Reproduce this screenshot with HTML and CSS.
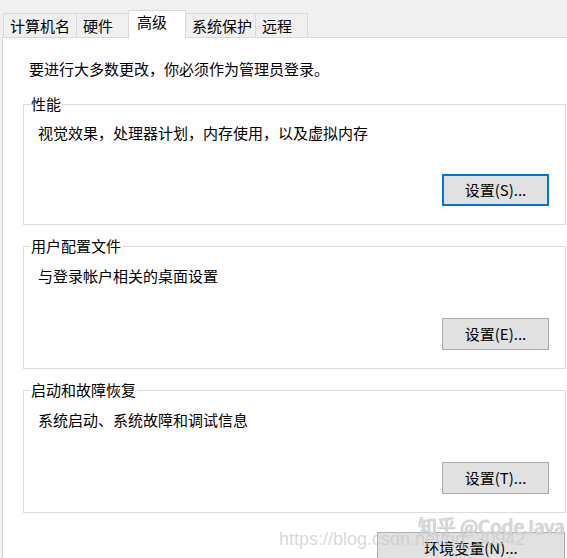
FILE: index.html
```html
<!DOCTYPE html>
<html lang="zh-CN">
<head>
<meta charset="utf-8">
<title>系统属性 - 高级</title>
<link rel="stylesheet" href="styles.css">
</head>
<body>
<div class="window">
  <div class="tabs">
    <div class="tab t1">计算机名</div>
    <div class="tab t2">硬件</div>
    <div class="tab t3 active">高级</div>
    <div class="tab t4">系统保护</div>
    <div class="tab t5">远程</div>
  </div>
  <div class="panel">
    <p class="intro">要进行大多数更改，你必须作为管理员登录。</p>
    <fieldset class="group">
      <legend>性能</legend>
      <p class="desc">视觉效果，处理器计划，内存使用，以及虚拟内存</p>
      <div class="btnrow"><button class="btn focused">设置(S)...</button></div>
    </fieldset>
    <fieldset class="group">
      <legend>用户配置文件</legend>
      <p class="desc">与登录帐户相关的桌面设置</p>
      <div class="btnrow"><button class="btn">设置(E)...</button></div>
    </fieldset>
    <fieldset class="group">
      <legend>启动和故障恢复</legend>
      <p class="desc">系统启动、系统故障和调试信息</p>
      <div class="btnrow"><button class="btn">设置(T)...</button></div>
    </fieldset>
    <div class="envrow"><button class="btn env">环境变量(N)...</button></div>
  </div>
  <div class="wm-url">https://blog.csdn.net/qq_30942</div>
  <div class="wm-zhihu">知乎 @CodeJava</div>
</div>
</body>
</html>
```
FILE: styles.css
```css
* { box-sizing: border-box; }
html, body {
  margin: 0;
  padding: 0;
  background: #f0f0f0;
}
body {
  font-family: "Noto Sans CJK SC", "Noto Sans", sans-serif;
  font-size: 15px;
  line-height: 20px;
  color: #000;
}
.window {
  position: relative;
  width: 567px;
  height: 558px;
  overflow: hidden;
}
.tabs {
  display: flex;
  align-items: flex-end;
  height: 38px;
  padding-left: 3px;
}
.tab {
  height: 25px;
  border: 1px solid #d9d9d9;
  border-bottom: none;
  background: #f0f0f0;
  margin-right: -1px;
  padding-left: 6px;
  line-height: 23px;
  white-space: nowrap;
}
.t1 { width: 74px; }
.t2 { width: 53px; }
.t3 { width: 58px; }
.t4 { width: 71px; }
.t5 { width: 53px; }
.tab.active {
  position: relative;
  z-index: 2;
  height: 29px;
  background: #fff;
  margin-bottom: -1px;
  padding-left: 8px;
  line-height: 22px;
}
.panel {
  position: relative;
  z-index: 1;
  margin-top: -1px;
  margin-left: 2px;
  height: 530px;
  background: #fff;
  border-top: 1px solid #d9d9d9;
  border-left: 1px solid #d9d9d9;
}
.intro {
  margin: 21px 0 0 26px;
}
.group {
  width: 543px;
  margin: 15px 0 0 20px;
  padding: 9px 16px 18px 14px;
  border: 1px solid #dcdcdc;
  min-inline-size: 0;
}
.group + .group {
  margin-top: 11px;
  padding-top: 10px;
}
.group legend {
  padding: 0 1px;
  margin-left: -8px;
  line-height: 20px;
}
.desc {
  margin: 0;
}
.btnrow {
  display: flex;
  justify-content: flex-end;
  margin-top: 31px;
}
.group + .group .btnrow { margin-top: 32px; }
.btn {
  font-family: "Noto Sans CJK SC", "Noto Sans", sans-serif;
  font-size: 15px;
  line-height: 20px;
  width: 107px;
  height: 32px;
  padding: 0;
  background: #e1e1e1;
  border: 1px solid #adadad;
  color: #000;
}
.btn.focused {
  border: 2px solid #0078d7;
}
.envrow {
  display: flex;
  margin: 19px 0 0 374px;
}
.btn.env {
  width: 188px;
}
.wm-url {
  position: absolute;
  left: 279px;
  top: 529px;
  font-family: "Liberation Sans", Arial, sans-serif;
  font-size: 18px;
  color: rgba(200, 200, 200, 0.7);
  z-index: 5;
  white-space: nowrap;
}
.wm-zhihu {
  position: absolute;
  left: 418px;
  top: 516px;
  font-family: "Noto Sans CJK SC", "Liberation Sans", sans-serif;
  font-size: 19px;
  color: rgba(255, 255, 255, 0.6);
  text-shadow: 0 0 1px #a8a8a8, 0 0 1px #a8a8a8;
  z-index: 6;
  white-space: nowrap;
}
```
